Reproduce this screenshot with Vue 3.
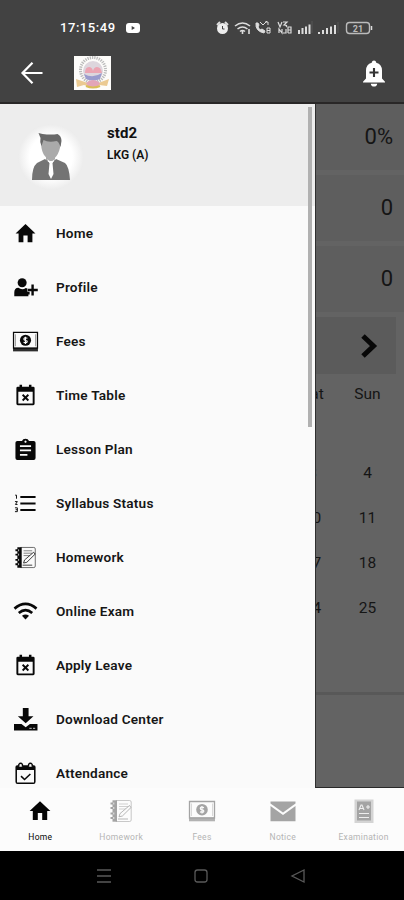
<script setup>
const glyphs = {
  home: '<path d="M12 2.2 22.4 12H19.2V21H14.2V14H9.8V21H4.8V12H1.6Z"/>',
  profile: '<circle cx="8.5" cy="7" r="4.7"/><path d="M.3 21V17.2Q.3 12.3 4.6 12.2Q8.5 15.2 12.3 12.4Q13.2 12.5 14 13V16.5H16.3V19.3H15V21Z"/><path d="M19.4 8.8V20.3M14.5 14.6H24.8" fill="none" stroke="currentColor" stroke-width="2.5"/>',
  fees: '<path d="M-.5 2.5H24.5V19H-.5Z" fill="none" stroke="currentColor" stroke-width="1.3"/><path d="M-1 18.5H25V22.3H-1Z" opacity=".85"/><path d="M1.5 4.5V17M22.5 4.5V17" fill="none" stroke="currentColor" stroke-width=".4"/><circle cx="12" cy="10.7" r="5.8"/><path d="M14 8.6Q10.2 7.3 10.3 9.5Q10.4 10.8 12.2 10.9Q14.1 11.2 13.7 12.6Q13 13.9 10 12.9M12 7V14.5" fill="none" stroke="#fafafa" stroke-width="1.2"/>',
  table: '<path fill-rule="evenodd" d="M4 2.8H5.800V.8H8.400V2.8H15.600V.8H18.200V2.8H20Q21.500 2.800 21.500 4.300V20.700Q21.500 22.200 20 22.200H4Q2.500 22.200 2.500 20.700V4.300Q2.500 2.800 4 2.800ZM4.500 8V20.300H19.500V8Z"/><path d="m9 11.200 6 6m0-6-6 6" fill="none" stroke="currentColor" stroke-width="1.900"/>',
  lesson: '<path fill-rule="evenodd" d="M3.5 3H8.3Q9.2.8 12 .8T15.7 3H20.5Q22.5 3 22.5 5V20.8Q22.5 23 20.5 23H3.5Q1.5 23 1.5 20.8V5Q1.5 3 3.5 3ZM12 2.7a1.1 1.1 0 1 0 .01 0Z"/><path d="M6.2 8.5H17.8M6.2 13H17.8M6.2 17.7H14" stroke="#fafafa" stroke-width="1.9"/>',
  syllabus: '<path d="M6.6 5.2H22.5M6.6 12H22.5M6.6 18.8H22.5" stroke="currentColor" stroke-width="2"/><path d="M1.2 3.3H2.6V7M1 10H3.5L1.5 13H3.7M1 16.5H3.5V20.5H1M1.7 18.5H3.5" fill="none" stroke="currentColor" stroke-width="1"/>',
  homework: '<path d="M7 1.5H20.5Q22.2 1.5 22.2 3V21Q22.2 22.5 20.5 22.5H7Z" fill="none" stroke="currentColor" stroke-width=".6"/><path d="M3.500 1.300H8V22.700H3.500Z"/><path d="M1.5 4.5H5M1.5 9H5M1.5 14.5H5M1.5 19H5" stroke="currentColor" stroke-width="2"/><path d="M4.8 3.5v2M4.8 8v2M4.8 13.5v2M4.8 18v2" stroke="#fafafa" stroke-width=".8"/><path d="M10 5H19M10 7.5H19M10 10H17" stroke="currentColor" stroke-width=".5"/><path d="m10 17.8 1-3.2L20.5 6.5 22 8.5 13.4 17ZM9 20H19" fill="#fafafa" stroke="currentColor" stroke-width=".8"/>',
  wifi: '<path d="M.5 9Q12 -.7 23.5 9M5 13.6Q12 7.6 19 13.6" fill="none" stroke="currentColor" stroke-width="2.8"/><path d="M8.3 16.5Q12 13.8 15.7 16.5L12 20.3Z"/>',
  download: '<path d="M9.2 0H15.2V8.5H20.3L12.2 16 4 8.5H9.2Z"/><path d="M0 16.8H7.8L12.2 20 16.6 16.8H24.5V23.5H0Z"/><path d="M16 21.2h2.5m1.3 0h2.3" stroke="#ccc" stroke-width="1"/>',
  attendance: '<path fill-rule="evenodd" d="M3.4 3.3H20.6Q22.5 3.3 22.5 5.3V20.5Q22.5 23 20.3 23H3.7Q1.5 23 1.5 20.5V5.3Q1.5 3.3 3.4 3.3ZM3.1 8.4V21.4H20.9V8.4Z"/><path d="M5 5V2.5Q7 .2 8.8 2.5V5M15.2 5V2.5Q17 .2 19 2.5V5" fill="#fafafa" stroke="currentColor" stroke-width="1.4"/><path d="m7.3 14.7 3.7 3.5 6.1-5.7" fill="none" stroke="currentColor" stroke-width="1.6"/>',
  mail: '<path d="M-.5 2.5H24.5V4.5L12 13.5-.5 4.5Z"/><path d="M-.5 7 12 16 24.5 7V22.2H-.5Z"/>',
  exam: '<path d="M2.5 .5H21.5V24H2.5Z" opacity=".45"/><path d="M5 2.500H19V21.500H5Z"/><path d="m7 11 2-5h1l2 5M8 9.5h3M14 8h4m-2-2v4M7 14.5H17M7 18.5H17" fill="none" stroke="#eee" stroke-width="1.1"/>'
}
const items = [
  ['home', 'Home'], ['profile', 'Profile'], ['fees', 'Fees'], ['table', 'Time Table'],
  ['lesson', 'Lesson Plan'], ['syllabus', 'Syllabus Status'], ['homework', 'Homework'],
  ['wifi', 'Online Exam'], ['table', 'Apply Leave'], ['download', 'Download Center'], ['attendance', 'Attendance']
]
const tabs = [['home', 'Home'], ['homework', 'Homework'], ['fees', 'Fees'], ['mail', 'Notice'], ['exam', 'Examination']]
const weeks = [['3', '4'], ['10', '11'], ['17', '18'], ['24', '25']]
</script>

<template>
  <div class="phone">
    <header>
      <div class="status">
        <span class="clock">17:15:49</span>
        <svg class="video" viewBox="0 0 14 10"><rect width="14" height="10" rx="3" fill="#fff"/><path d="m5.7 3 3.3 2-3.3 2z" fill="#424242"/></svg>
        <svg class="signals" viewBox="0 0 160 18" fill="none" stroke="#ddd">
          <circle cx="7.500" cy="9.500" r="4.500" fill="#eee" stroke-width="2" stroke="#eee"/><path d="m2 6 3-3m5 0 3 3" stroke-width="2"/><path d="M7.500 7v3h2" stroke="#424242"/>
          <path d="M20 7q7.500-6 15 0M22.500 10q5-4 10 0M25 12.500q2.500-2 5 0" stroke-width="1.600"/><path d="M27.500 12v3M34 10v5" stroke-width="1.6"/>
          <path d="M41 4q-1 8 8 10l1-2-3-2-2 1-2-3 1-2-1-2z" fill="#ddd"/><path d="m45 3 3 3 4-4M50 3h3v3" /><path d="M52 9h3v5h-3zM52 11.500h3"/>
          <path d="m63 3 2 5 2-5m1 0h4l-3 3q4 0 2 2M64 14v-4l3 4v-4m1 4h3v-4m2 4v-6h3v6h-3m0-3h3" stroke-width="1.2"/>
          <path d="M84 15v-4M87.500 15V9M91 15V7.500M94.500 15V5.500" stroke-width="2"/><path d="M104 15v-2M108 15v-4M112 15V9M116 15V7.500M120 15V6" stroke-width="2"/>
          <path d="M97 2v12M123 3v11" stroke="#666" stroke-width=".6"/>
          <rect x="131.500" y="3.500" width="23" height="11" rx="3" stroke="#bbb" stroke-width="1.4"/><path d="M156.500 7v4" stroke-width="1.500"/>
          <text x="143" y="12.500" text-anchor="middle" class="battery">21</text>
        </svg>
      </div>
      <div class="appbar">
        <svg class="back" viewBox="0 0 24 24"><path d="M22.500 12H3M12.500 1.800 2.500 12l10 10.200" fill="none" stroke="#fff" stroke-width="2.200"/></svg>
        <svg class="crest" viewBox="0 0 37 34"><path fill="#fdfcfa" d="M0 0h37v34H0z"/><circle cx="19" cy="14" r="12.500" fill="none" stroke="#bbb" stroke-width="3" stroke-dasharray="1.300 1"/><circle cx="19" cy="15" r="10" fill="#ddd6dd"/><path d="M11 17q0-6 4-6 3 0 4 4 1-4 4-4 4 0 5 6z" fill="#eba4b2"/><path d="M10 18q9 5 18-1l-2 6q-7 3-14 0z" fill="#9a9bcd"/><path d="m2 23 9 3q8 4 16 0l8-3-2 7-8-1q-7 4-15 0l-7 2z" fill="#ebca92"/><path d="M12 27q7-6 14 0l-2 4h-9z" fill="#e3a6b8"/><path d="M12 30q7 3 14 0" fill="none" stroke="#d8bd58" stroke-width="2"/></svg>
        <svg class="bell" viewBox="0 0 24 28"><path d="M12 1.500Q14 1.500 14.300 3.800 20 5.500 20 11.500v8l3 3.200v.8H1v-.8l3-3.200v-8Q4 5.500 9.700 3.800 10 1.500 12 1.500ZM8.800 24.700h6.400Q15 27.500 12 27.500T8.800 24.700Z" fill="#fff"/><path d="M12 9v9M7.500 13.500h9" stroke="#333" stroke-width="2.100"/></svg>
      </div>
    </header>

    <main>
      <aside>
        <div class="student">
          <svg class="avatar" viewBox="0 0 66 66">
            <defs><radialGradient id="halo"><stop offset=".65" stop-color="#fff"/><stop offset="1" stop-color="#ececec"/></radialGradient></defs>
            <circle cx="33" cy="33" r="33" fill="url(#halo)"/>
            <path d="M23 16q-.5 17 10 20 9-3 10-20z" fill="#aaa"/><path d="m20.500 9 4 1q9 1 15 0 4 2 4 7l-1 6q-2-6-4-6-8 2-13-1l-2 6q-2-4-1-8z" fill="#696969"/>
            <path d="M28 33h9v4h-9z" fill="#aaa"/><path d="m27 35 6 5 5-5 9 4q4 3 5 17H14q0-13 5-17z" fill="#747474"/><path d="m29 35 4 3 4-3-2.500 4 1 11-2.500 5-2.500-5 1-11z" fill="#fff"/>
          </svg>
          <div class="who"><strong>std2</strong><span>LKG (A)</span></div>
        </div>
        <nav class="menu">
          <a v-for="([icon, label], i) in items" :key="i"><svg viewBox="0 0 24 24" v-html="glyphs[icon]"></svg><span>{{ label }}</span></a>
        </nav>
        <i class="scroll"></i>
      </aside>
      <section class="page">
        <div class="stat">0%</div>
        <div class="stat">0</div>
        <div class="stat">0</div>
        <div class="next"><svg viewBox="0 0 16 24"><path d="m2 2 10.500 10L2 22" fill="none" stroke="#080808" stroke-width="5"/></svg></div>
        <div class="days"><span>Sat</span><span>Sun</span></div>
        <div class="weeks"><template v-for="w in weeks" :key="w[0]"><span>{{ w[0] }}</span><span>{{ w[1] }}</span></template></div>
        <div class="foot"></div>
      </section>
    </main>

    <nav class="tabs">
      <a v-for="([icon, label], i) in tabs" :key="label" :class="{ active: i === 0 }"><svg viewBox="0 0 24 24" v-html="glyphs[icon]"></svg><span>{{ label }}</span></a>
    </nav>
    <footer>
      <svg viewBox="0 0 18 18"><path d="M2 3h14M2 9h14M2 15h14"/></svg>
      <svg viewBox="0 0 18 18"><rect x="3" y="3" width="12" height="12" rx="2.500"/></svg>
      <svg viewBox="0 0 18 18"><path d="M15 3v12L3 9z"/></svg>
    </footer>
  </div>
</template>

<style>
body { margin: 0; background: #000; }
</style>
<style scoped>
* { box-sizing: border-box; }
.phone { width: 404px; height: 900px; overflow: hidden; display: flex; flex-direction: column; font-family: Roboto, sans-serif; background: #000; }
svg { display: block; flex: none; overflow: visible; }
header { height: 104px; background: #424242; border-bottom: 2px solid #292727; }
.status { height: 44px; padding: 11px 29px 0 60px; display: flex; align-items: center; }
.clock { color: #fff; font-size: 13px; font-weight: 500; letter-spacing: .55px; width: 66px; }
.video { width: 14px; height: 10px; }
.signals { width: 160px; height: 18px; margin-left: auto; }
.battery { font: 700 9px Roboto, sans-serif; fill: #bbb; stroke: none; }
.appbar { height: 58px; display: flex; align-items: center; padding: 0 18px 0 20px; }
.back { width: 24px; height: 24px; }
.crest { width: 37px; height: 34px; margin-left: 30px; }
.bell { width: 24px; height: 28px; margin-left: auto; }
main { height: 684px; display: grid; grid-template-columns: 316px 88px; overflow: hidden; background: #636363; }
aside { position: relative; background: #fafafa; height: 684px; overflow: hidden; border-right: 1px solid #303030; }
.student { height: 102px; background: #ededed; padding: 20px 18px; display: flex; }
.avatar { width: 66px; height: 66px; }
.who { display: flex; flex-direction: column; margin-left: 23px; color: #111; }
.who strong { font-size: 15px; line-height: 18px; font-weight: 700; letter-spacing: .1px; }
.who span { font-size: 12px; line-height: 15px; font-weight: 600; margin-top: 6px; }
.menu a { height: 54px; display: flex; align-items: center; padding-left: 14px; color: #080808; }
.menu svg { width: 23px; height: 23px; fill: currentColor; margin-right: 19px; }
.menu span { font-size: 13.6px; font-weight: 600; letter-spacing: .22px; color: #161616; }
.scroll { position: absolute; width: 4px; height: 320px; top: 3px; right: 3px; background: #b1b1b1; }
.page { color: #151515; height: 684px; overflow: hidden; border-bottom: 1px solid #292929; }
.stat { height: 66px; margin-bottom: 5px; background: #5e5e5e; text-align: right; line-height: 66px; padding-right: 11px; font-size: 22px; }
.next { height: 57px; width: 80px; background: #5b5b5b; display: flex; align-items: center; justify-content: center; padding-left: 26px; }
.next svg { width: 16px; height: 24px; }
.days, .weeks { display: grid; grid-template-columns: 55px 55px; margin-left: -31px; width: 110px; text-align: center; }
.days { height: 41px; line-height: 41px; font-size: 15.5px; }
.weeks { margin-top: 37px; grid-auto-rows: 45px; line-height: 42px; font-size: 15.5px; }
.foot { margin-top: 60px; border-top: 3px solid #585858; }
.tabs { height: 63px; display: grid; grid-template-columns: repeat(5, 1fr); background: #fcfcfc; }
.tabs a { display: flex; flex-direction: column; align-items: center; padding-top: 11px; color: #a4a4a4; }
.tabs svg { width: 24px; height: 24px; fill: currentColor; }
.tabs span { font-size: 8.5px; line-height: 10px; margin-top: 9px; letter-spacing: .3px; color: #b4b4b4; }
.tabs .active, .tabs .active span { color: #050505; }
footer { height: 49px; background: #000; display: flex; align-items: center; justify-content: center; gap: 79px; padding-right: 2px; }
footer svg { width: 18px; height: 18px; fill: none; stroke: #595959; stroke-width: 1.3; }
</style>
